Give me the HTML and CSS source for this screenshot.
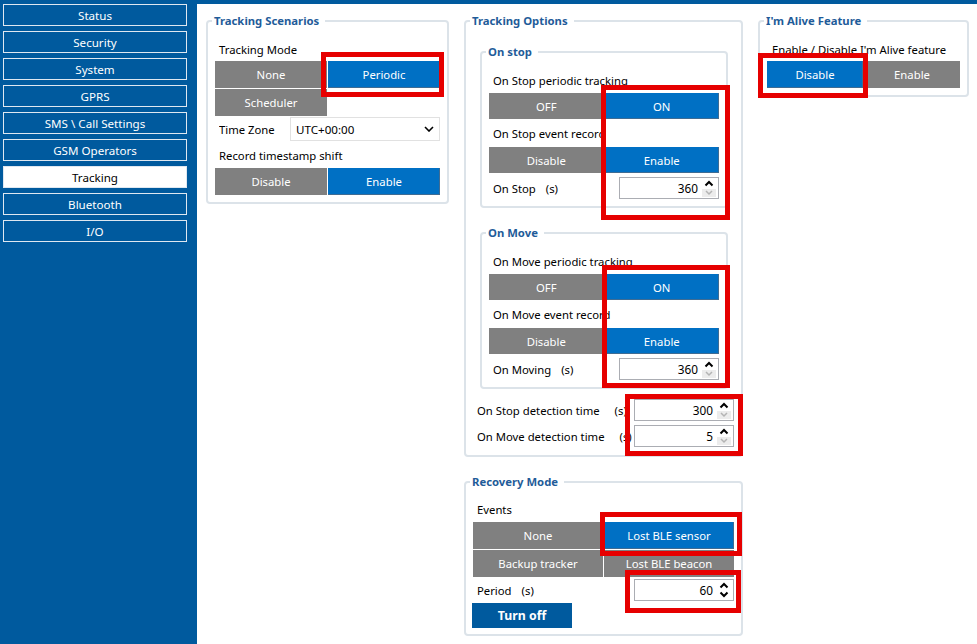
FILE: index.html
```html
<html>
  <head>
    <link rel="stylesheet" href="styles.css">
    <title>Tracking</title>
  </head>
  <body>
    <div class="app">
      <nav class="sidebar">
        <div class="nav-item">Status</div>
        <div class="nav-item">Security</div>
        <div class="nav-item">System</div>
        <div class="nav-item">GPRS</div>
        <div class="nav-item">SMS \ Call Settings</div>
        <div class="nav-item">GSM Operators</div>
        <div class="nav-item active">Tracking</div>
        <div class="nav-item">Bluetooth</div>
        <div class="nav-item">I/O</div>
      </nav>

      <main class="content">
        <fieldset class="box box-scenarios">
          <legend>Tracking Scenarios</legend>
          <div class="box-body">
            <div class="row-label">Tracking Mode</div>
            <div class="toggle">
              <div class="btn">None</div>
              <div class="btn on">Periodic</div>
              <div class="btn">Scheduler</div>
            </div>
            <div class="field field-tz">
              <span class="field-label">Time Zone</span>
              <div class="select">
                <span>UTC+00:00</span>
                <svg width="10" height="6" viewBox="0 0 10 6"><path d="M1 1 L5 5 L9 1" fill="none" stroke="#000" stroke-width="1.6"/></svg>
              </div>
            </div>
            <div class="row-label row-shift">Record timestamp shift</div>
            <div class="toggle">
              <div class="btn">Disable</div>
              <div class="btn on">Enable</div>
            </div>
          </div>
        </fieldset>

        <div class="column">
          <fieldset class="box box-options">
            <legend>Tracking Options</legend>
            <div class="box-body">
              <fieldset class="box sub-box">
                <legend>On stop</legend>
                <div class="box-body">
                  <div class="row-label row-tall">On Stop periodic tracking</div>
                  <div class="toggle short">
                    <div class="btn">OFF</div>
                    <div class="btn on">ON</div>
                  </div>
                  <div class="row-label row-taller">On Stop event record</div>
                  <div class="toggle short">
                    <div class="btn">Disable</div>
                    <div class="btn on">Enable</div>
                  </div>
                  <div class="field field-spin">
                    <span class="field-label">On Stop<span class="unit">(s)</span></span>
                    <div class="spin">
                      <span class="spin-val">360</span>
                      <svg class="spin-arrows" width="16" height="20" viewBox="0 0 16 20"><path d="M4.5 7.5 L8 4 L11.5 7.5" fill="none" stroke="#000" stroke-width="2"/><rect x="1" y="11" width="14" height="8" fill="#ececec"/><path d="M5 13 L8 16 L11 13" fill="none" stroke="#b4b4b4" stroke-width="1.5"/></svg>
                    </div>
                  </div>
                </div>
              </fieldset>

              <fieldset class="box sub-box sub-move">
                <legend>On Move</legend>
                <div class="box-body">
                  <div class="row-label row-tall">On Move periodic tracking</div>
                  <div class="toggle short">
                    <div class="btn">OFF</div>
                    <div class="btn on">ON</div>
                  </div>
                  <div class="row-label row-taller">On Move event record</div>
                  <div class="toggle short">
                    <div class="btn">Disable</div>
                    <div class="btn on">Enable</div>
                  </div>
                  <div class="field field-spin">
                    <span class="field-label">On Moving<span class="unit">(s)</span></span>
                    <div class="spin">
                      <span class="spin-val">360</span>
                      <svg class="spin-arrows" width="16" height="20" viewBox="0 0 16 20"><path d="M4.5 7.5 L8 4 L11.5 7.5" fill="none" stroke="#000" stroke-width="2"/><rect x="1" y="11" width="14" height="8" fill="#ececec"/><path d="M5 13 L8 16 L11 13" fill="none" stroke="#b4b4b4" stroke-width="1.5"/></svg>
                    </div>
                  </div>
                </div>
              </fieldset>

              <div class="field field-detect">
                <span class="field-label">On Stop detection time<span class="unit wide">(s)</span></span>
                <div class="spin">
                  <span class="spin-val">300</span>
                  <svg class="spin-arrows" width="16" height="20" viewBox="0 0 16 20"><path d="M4.5 7.5 L8 4 L11.5 7.5" fill="none" stroke="#000" stroke-width="2"/><rect x="1" y="11" width="14" height="8" fill="#ececec"/><path d="M5 13 L8 16 L11 13" fill="none" stroke="#b4b4b4" stroke-width="1.5"/></svg>
                </div>
              </div>
              <div class="field field-detect second">
                <span class="field-label">On Move detection time<span class="unit wide">(s)</span></span>
                <div class="spin">
                  <span class="spin-val">5</span>
                  <svg class="spin-arrows" width="16" height="20" viewBox="0 0 16 20"><path d="M4.5 7.5 L8 4 L11.5 7.5" fill="none" stroke="#000" stroke-width="2"/><rect x="1" y="11" width="14" height="8" fill="#ececec"/><path d="M5 13 L8 16 L11 13" fill="none" stroke="#b4b4b4" stroke-width="1.5"/></svg>
                </div>
              </div>
            </div>
          </fieldset>

          <fieldset class="box box-recovery">
            <legend>Recovery Mode</legend>
            <div class="box-body">
              <div class="row-label row-events">Events</div>
              <div class="toggle">
                <div class="btn">None</div>
                <div class="btn on">Lost BLE sensor</div>
                <div class="btn">Backup tracker</div>
                <div class="btn">Lost BLE beacon</div>
              </div>
              <div class="field field-period">
                <span class="field-label">Period<span class="unit">(s)</span></span>
                <div class="spin">
                  <span class="spin-val">60</span>
                  <svg class="spin-arrows" width="16" height="20" viewBox="0 0 16 20"><path d="M4.5 7.5 L8 4 L11.5 7.5" fill="none" stroke="#000" stroke-width="2"/><path d="M4.5 12.5 L8 16 L11.5 12.5" fill="none" stroke="#000" stroke-width="2"/></svg>
                </div>
              </div>
              <div class="turn-off">Turn off</div>
            </div>
          </fieldset>
        </div>

        <fieldset class="box box-alive">
          <legend>I'm Alive Feature</legend>
          <div class="box-body">
            <div class="row-label">Enable / Disable I'm Alive feature</div>
            <div class="toggle">
              <div class="btn on">Disable</div>
              <div class="btn">Enable</div>
            </div>
          </div>
        </fieldset>
      </main>

      <!-- red highlight frames drawn over the form -->
      <div class="mark m-periodic"></div>
      <div class="mark m-onstop"></div>
      <div class="mark m-onmove"></div>
      <div class="mark m-detect"></div>
      <div class="mark m-sensor"></div>
      <div class="mark m-period"></div>
      <div class="mark m-alive"></div>
    </div>
  </body>
</html>
```

FILE: styles.css
```css
* {
  box-sizing: border-box;
}
html,
body {
  margin: 0;
  height: 100%;
}
body {
  background-color: #fff;
  color: #000;
  font-family: "Noto Sans", "Open Sans", sans-serif;
  font-size: 11.3px;
}
.app {
  position: relative;
  display: flex;
  height: 644px;
}

/* left menu */
.sidebar {
  display: flex;
  flex-direction: column;
  gap: 5px;
  width: 197px;
  padding: 4px 0 0 3px;
  background-color: #005a9e;
}
.nav-item {
  display: flex;
  align-items: center;
  justify-content: center;
  width: 184px;
  height: 22px;
  border: 1px solid #dfe8f1;
  color: #fff;
  font-size: 11.6px;
}
.nav-item.active {
  background-color: #fff;
  color: #000;
}

/* form area */
.content {
  display: flex;
  align-items: flex-start;
  gap: 15px;
  flex: 1;
  padding: 9px 0 0 9px;
  border-top: 4px solid #005a9e;
}
.column {
  display: flex;
  flex-direction: column;
  width: 279px;
}
.box {
  min-width: 0;
  margin: 0;
  padding: 0;
  border: 2px solid #dce3e9;
  border-radius: 4px;
}
.box legend {
  margin-left: 4px;
  padding: 0 6px 0 2px;
  color: #1f5c99;
  font-weight: bold;
  line-height: 16px;
}
.box-body {
  display: flex;
  flex-direction: column;
  padding: 8px 7px 7px;
}
.box-scenarios {
  width: 243px;
}
.box-options > .box-body {
  padding: 15px 7px 8px;
}
.sub-box {
  margin: 0 6px 0 7px;
}
.sub-box > .box-body {
  padding: 7px 7px 7px;
}
.sub-move {
  margin-top: 17px;
}
.box-recovery {
  margin-top: 17px;
}
.box-recovery > .box-body {
  padding: 7px 7px 6px;
}
.box-alive {
  width: 211px;
}

.row-label {
  display: flex;
  align-items: center;
  height: 24px;
  padding-left: 4px;
  white-space: nowrap;
}
.row-tall {
  height: 26px;
}
.row-taller {
  height: 28px;
}
.row-shift {
  height: 26px;
}
.row-events {
  height: 25px;
}
.box-alive .row-label {
  padding-left: 5px;
}

.toggle {
  display: grid;
  grid-template-columns: 1fr 1fr;
  gap: 1px;
}
.btn {
  display: flex;
  align-items: center;
  justify-content: center;
  height: 27px;
  background-color: #808080;
  color: #fff;
  white-space: nowrap;
}
.btn.on {
  background-color: #0070c4;
  box-shadow: inset -1px -1px 0 #3f6c93;
}
.toggle.short .btn {
  height: 26px;
}

.field {
  display: flex;
  align-items: center;
  justify-content: space-between;
  padding-left: 4px;
}
.field-label {
  flex: 1;
  min-width: 0;
  overflow: hidden;
  white-space: nowrap;
}
.unit {
  margin-left: 10px;
}
.unit.wide {
  margin-left: 15px;
}
.field-tz {
  height: 26px;
}
.select {
  display: flex;
  align-items: center;
  justify-content: space-between;
  width: 150px;
  height: 24px;
  padding: 0 5px 0 5px;
  border: 1px solid #e1e1e1;
  font-size: 11.6px;
}
.field-spin {
  margin-top: 4px;
}
.field-detect {
  margin-top: 10px;
  padding-left: 4px;
}
.field-detect.second {
  margin-top: 4px;
}
.field-period {
  margin-top: 2px;
}
.spin {
  display: flex;
  align-items: center;
  justify-content: flex-end;
  flex: none;
  width: 100px;
  height: 22px;
  padding-right: 1px;
  border: 1px solid #abadb3;
  background-color: #fff;
  font-size: 11.8px;
}
.spin-val {
  margin-right: 3px;
}

.turn-off {
  display: flex;
  align-items: center;
  justify-content: center;
  width: 100px;
  height: 25px;
  margin-top: 2px;
  margin-left: -1px;
  background-color: #005a9e;
  color: #fff;
  font-size: 12.3px;
  font-weight: bold;
}

/* annotation frames */
.mark {
  position: absolute;
  border: 5px solid #e60000;
  pointer-events: none;
}
.m-periodic {
  left: 321px;
  top: 52px;
  width: 123px;
  height: 45px;
}
.m-onstop {
  left: 601px;
  top: 85px;
  width: 129px;
  height: 135px;
}
.m-onmove {
  left: 602px;
  top: 265px;
  width: 128px;
  height: 123px;
}
.m-detect {
  left: 625px;
  top: 394px;
  width: 118px;
  height: 62px;
}
.m-sensor {
  left: 600px;
  top: 512px;
  width: 142px;
  height: 44px;
}
.m-period {
  left: 625px;
  top: 570px;
  width: 116px;
  height: 43px;
}
.m-alive {
  left: 758px;
  top: 53px;
  width: 110px;
  height: 45px;
}
```
